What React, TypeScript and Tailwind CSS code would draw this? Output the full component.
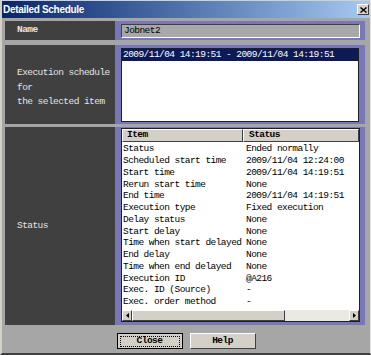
import React from "react";

const rows: [string, string][] = [
  ["Status", "Ended normally"],
  ["Scheduled start time", "2009/11/04 12:24:00"],
  ["Start time", "2009/11/04 14:19:51"],
  ["Rerun start time", "None"],
  ["End time", "2009/11/04 14:19:51"],
  ["Execution type", "Fixed execution"],
  ["Delay status", "None"],
  ["Start delay", "None"],
  ["Time when start delayed", "None"],
  ["End delay", "None"],
  ["Time when end delayed", "None"],
  ["Execution ID", "@A216"],
  ["Exec. ID (Source)", "-"],
  ["Exec. order method", "-"],
];

const mono = "font-['Liberation_Mono',monospace] text-[9.5px] tracking-[-0.55px]";

function Bevel({ className = "", children }: { className?: string; children?: React.ReactNode }) {
  return (
    <div className={`border border-t-white border-l-white border-r-[#404040] border-b-[#404040] bg-[#d4d0c8] ${className}`}>
      {children}
    </div>
  );
}

export default function App() {
  return (
    <div className="w-[371px] h-[355px] bg-[#a6a6a6] border-l-2 border-t border-r border-b-2 border-l-[#d4d0c8] border-t-[#d4d0c8] border-r-[#e0e0e0] border-b-[#404040] flex flex-col overflow-hidden">
      {/* Title bar */}
      <div className="h-[17px] shrink-0 flex items-center justify-between bg-gradient-to-r from-[#0a246a] to-[#a6caf0] pl-[1px] pr-[1px]">
        <span className="font-['Liberation_Sans',sans-serif] font-bold text-[10px] tracking-[-0.3px] text-white leading-none">
          Detailed Schedule
        </span>
        <Bevel className="w-[12px] h-[11px] flex items-center justify-center">
          <svg width="7" height="6" viewBox="0 0 7 6">
            <path d="M0.5 0.5 L6.5 5.5 M6.5 0.5 L0.5 5.5" stroke="#000" strokeWidth="1.4" />
          </svg>
        </Bevel>
      </div>

      <div className="flex flex-col pl-[3px] pr-[3px] pt-[3px]">
        {/* Name row */}
        <div className="flex h-[19px]">
          <div className={`w-[110px] bg-[#404040] text-[#e4e4e4] font-bold flex items-center pl-[12px] ${mono}`}>Name</div>
          <div className="w-[250px] bg-[#7878b8] pl-[6px] pr-[5px] pt-[3px]">
            <div className={`h-[14px] bg-[#a8a8a8] border border-t-[#404040] border-l-[#404040] border-r-white border-b-white flex items-center pl-[2px] text-black ${mono}`}>
              Jobnet2
            </div>
          </div>
        </div>

        {/* Execution schedule row */}
        <div className="flex h-[79px] mt-[5px]">
          <div className={`w-[110px] bg-[#404040] text-[#e4e4e4] flex flex-col justify-center pl-[12px] pt-[7px] leading-[14.5px] ${mono}`}>
            <div>Execution schedule</div>
            <div>for</div>
            <div>the selected item</div>
          </div>
          <div className="w-[250px] bg-[#7878b8] pl-[6px] pr-[6px] pt-[3px] pb-[2px]">
            <div className="h-full bg-white border border-[#202020]">
              <div className={`h-[12px] bg-[#0c1a58] text-white flex items-center pl-[1px] ${mono}`}>
                2009/11/04 14:19:51 - 2009/11/04 14:19:51
              </div>
            </div>
          </div>
        </div>

        {/* Status row */}
        <div className="flex h-[198px] mt-[3px]">
          <div className={`w-[110px] bg-[#404040] text-[#e4e4e4] flex items-center pl-[12px] ${mono}`}>Status</div>
          <div className="w-[250px] bg-[#7878b8] pl-[6px] pr-[5px] pt-[1px] pb-[3px]">
            <div className="h-full bg-white border border-[#202020] flex flex-col">
              <div className={`flex h-[13px] shrink-0 text-black ${mono}`}>
                <Bevel className="w-[121px] flex items-center pl-[4px] font-bold">Item</Bevel>
                <Bevel className="flex-1 flex items-center pl-[5px] font-bold">Status</Bevel>
              </div>
              <div className="flex-1 flex flex-col pt-[1.5px]">
                {rows.map(([a, b]) => (
                  <div key={a} className={`flex h-[11.77px] items-center text-black whitespace-nowrap ${mono}`}>
                    <div className="w-[124px] pl-[1px] overflow-hidden">{a}</div>
                    <div className="flex-1">{b}</div>
                  </div>
                ))}
              </div>
              {/* horizontal scrollbar */}
              <div className="h-[11px] shrink-0 flex bg-[#ebe9e4]">
                <Bevel className="w-[10px] flex items-center justify-center">
                  <svg width="3" height="5" viewBox="0 0 3 5"><path d="M3 0 L0 2.5 L3 5 Z" fill="#000" /></svg>
                </Bevel>
                <Bevel className="w-[153px]" />
                <div className="flex-1" />
                <Bevel className="w-[10px] flex items-center justify-center">
                  <svg width="3" height="5" viewBox="0 0 3 5"><path d="M0 0 L3 2.5 L0 5 Z" fill="#000" /></svg>
                </Bevel>
              </div>
            </div>
          </div>
        </div>

        {/* Buttons */}
        <div className="flex justify-center gap-[7px] mt-[8px]">
          <div className="w-[66px] h-[16px] border border-black bg-[#d4d0c8] flex items-center justify-center">
            <div className={`w-[60px] h-[11px] border border-dotted border-black flex items-center justify-center font-bold text-black ${mono}`}>Close</div>
          </div>
          <Bevel className={`w-[66px] h-[16px] flex items-center justify-center font-bold text-black ${mono}`}>Help</Bevel>
        </div>
      </div>
    </div>
  );
}
